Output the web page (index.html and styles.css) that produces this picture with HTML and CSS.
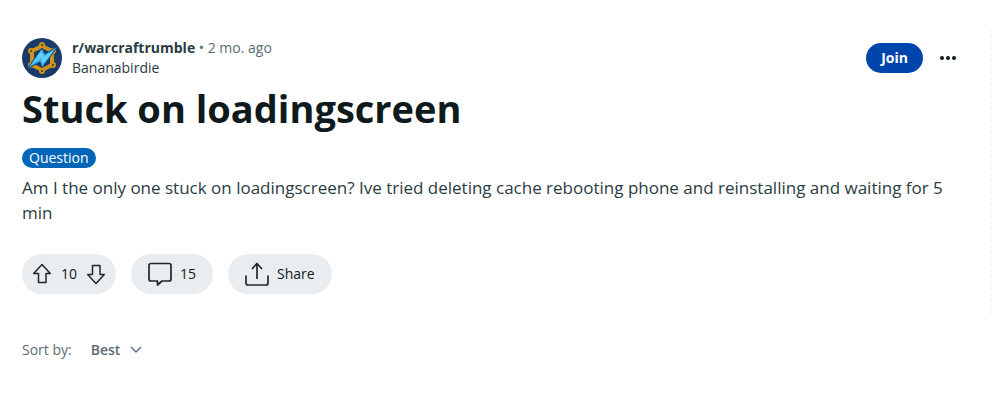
FILE: index.html
```html
<!DOCTYPE html>
<html lang="en">
<head>
<meta charset="utf-8">
<meta name="viewport" content="width=device-width, initial-scale=1">
<title>Stuck on loadingscreen</title>
<link rel="stylesheet" href="styles.css">
</head>
<body>
<main class="page">
  <article class="post">
    <header class="post-header">
      <svg class="avatar" viewBox="0 0 40 40" aria-hidden="true">
        <circle cx="20" cy="20" r="20" fill="#1b3a68"/>
        <path d="M20 8 30 13V27L20 32 10 27V13Z" fill="none" stroke="#cf931c" stroke-width="4" stroke-linejoin="round"/>
        <g fill="#3c3524" stroke="#cf931c" stroke-width="2"><circle cx="20" cy="7" r="2"/><circle cx="31" cy="13" r="2"/><circle cx="31" cy="27" r="2"/><circle cx="20" cy="33" r="2"/><circle cx="9" cy="27" r="2"/><circle cx="9" cy="13" r="2"/></g>
        <path d="M36 8 23 16l-3-6L5 31l13-7 2 6Z" fill="#35b4ee" stroke="#17406f" stroke-width="1"/>
        <path d="M32 12 22 19l-3-6-9 13 9-6 2 6Z" fill="#62cff8"/>
      </svg>
      <div class="byline">
        <div><a class="community" href="#">r/warcraftrumble</a> <span class="meta">• <time>2 mo. ago</time></span></div>
        <a class="author" href="#">Bananabirdie</a>
      </div>
      <button class="join" type="button">Join</button>
      <button class="more" type="button" aria-label="More options">
        <svg viewBox="0 0 16 4" width="16" height="4" fill="#0f1a1c"><circle cx="2" cy="2" r="2"/><circle cx="8" cy="2" r="2"/><circle cx="14" cy="2" r="2"/></svg>
      </button>
    </header>
    <h1 class="title">Stuck on loadingscreen</h1>
    <a class="flair" href="#">Question</a>
    <p class="body">Am I the only one stuck on loadingscreen? Ive tried deleting cache rebooting phone and reinstalling and waiting for 5 min</p>
    <div class="actions">
      <div class="pill votes">
        <button class="vote" type="button" aria-label="Upvote">
          <svg viewBox="0 0 20 22" width="20" height="22"><path d="M10 1.500 18.300 10.500H14V19.500H6.500V10.500H1.700Z"/></svg>
        </button>
        <span>10</span>
        <button class="vote" type="button" aria-label="Downvote">
          <svg viewBox="0 0 20 22" width="20" height="22"><path d="M10 20.500 1.700 11.500H6.500V2.500H14V11.500H18.300Z"/></svg>
        </button>
      </div>
      <button class="pill" type="button">
        <svg viewBox="0 0 24 26" width="24" height="26"><path d="M3 2.500H21Q23 2.500 23 4.500V18Q23 20 21 20H14L9.500 24V20H3Q1 20 1 18V4.500Q1 2.500 3 2.500Z"/></svg>
        15
      </button>
      <button class="pill" type="button">
        <svg viewBox="0 0 24 26" width="24" height="26"><path d="M12 18V3M7 8l5-5.500L17 8M1 14.500V22Q1 24 3 24H21Q23 24 23 22V14.500"/></svg>
        Share
      </button>
    </div>
  </article>
  <div class="sort">
    <label for="sort">Sort by:</label>
    <select id="sort"><option>Best</option></select>
    <svg class="chevron" viewBox="0 0 12 8" width="12" height="8"><path d="M1 1l5 5 5-5"/></svg>
  </div>
</main>
</body>
</html>
```
FILE: styles.css
```css
* { box-sizing: border-box; }

body {
  margin: 0;
  background: #fff;
  color: #0f1a1c;
  font-family: "Open Sans", "Noto Sans", sans-serif;
  font-size: 14px;
  line-height: 20px;
}

a { color: inherit; text-decoration: none; }

button, select {
  margin: 0;
  padding: 0;
  border: 0;
  background: none;
  color: inherit;
  font: inherit;
}

svg { display: block; flex: none; }

.page { padding: 30px 1px 0 22px; }

.post {
  padding: 8px 0 24px;
  background: repeating-linear-gradient(#e0e0e0 0 1px, #fff 1px 4px, #e0e0e0 4px 5px, #fff 5px 6px, #e0e0e0 6px 7px, #fff 7px 12px) right top / 1px 100% no-repeat;
}

.post-header {
  display: flex;
  align-items: center;
  padding-right: 28px;
}

.avatar { width: 40px; height: 40px; }

.byline { flex: 1; margin-left: 10px; color: #2a3c42; }

.community { font-weight: 700; }

.meta { color: #5c6c74; }

.join {
  height: 30px;
  padding: 0 15px;
  border-radius: 15px;
  background: #0045ac;
  color: #fff;
  font-weight: 700;
}

.more {
  display: grid;
  place-items: center;
  width: 32px;
  height: 32px;
  margin-left: 9px;
}

.title {
  margin: 4px 0 14px;
  font-size: 38px;
  line-height: 52px;
}

.flair {
  display: block;
  width: fit-content;
  padding: 0 7px;
  border-radius: 10px;
  background: #0266b8;
  color: #fff;
}

.body {
  margin: 7px 40px 29px 0;
  color: #2a3c42;
  font-size: 17px;
  line-height: 25px;
}

.actions { display: flex; gap: 15px; }

.pill {
  display: flex;
  align-items: center;
  gap: 8px;
  height: 40px;
  padding: 0 17px;
  border-radius: 20px;
  background: #e9edf0;
  font-weight: 500;
}

.pill path {
  fill: none;
  stroke: #1b292e;
  stroke-width: 1.7;
  stroke-linejoin: round;
}

.votes { gap: 9px; padding: 0 10px; }

.pill .vote path { stroke-width: 1.5; }

.sort {
  display: flex;
  align-items: center;
  margin-top: 22px;
  color: #5c6c74;
}

.sort select {
  appearance: none;
  margin: 0 9px 0 19px;
  font-weight: 600;
}

.chevron path {
  fill: none;
  stroke: #62738c;
  stroke-width: 1.5;
}
```
